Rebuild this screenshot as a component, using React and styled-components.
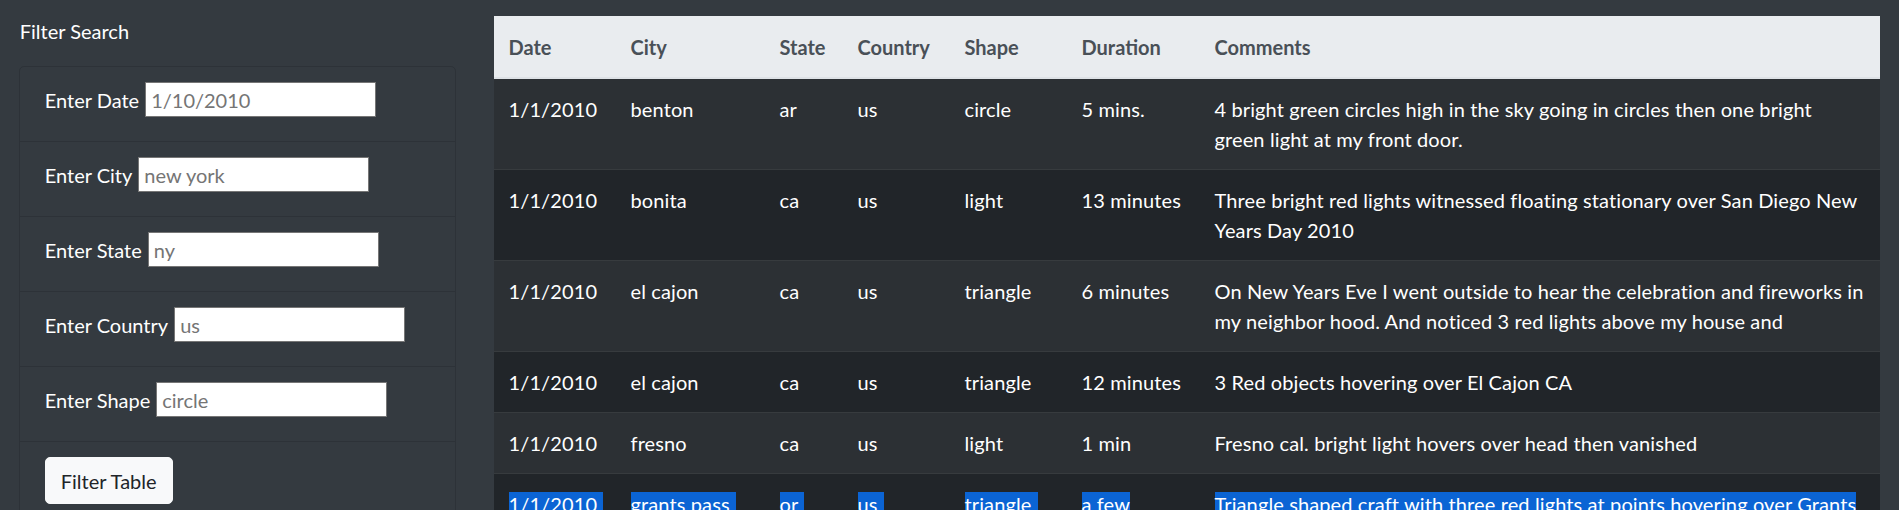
import React from "react";
import styled, { createGlobalStyle } from "styled-components";

const GlobalStyle = createGlobalStyle`
  html, body {
    margin: 0;
    overflow: hidden;
    background-color: #343a40;
  }
  body {
    font-family: Lato, "Liberation Sans", sans-serif;
    font-size: 20px;
    line-height: 30px;
    color: #fff;
  }
`;

const Page = styled.div`
  display: grid;
  grid-template-columns: 25% 75%;
`;

const Sidebar = styled.aside`
  padding: 16px 18.75px 0;
`;

const Title = styled.p`
  margin: 0 0 20px;
  padding-left: 1px;
`;

const FilterList = styled.ul`
  list-style: none;
  margin: 0;
  padding: 0;
  border: 1px solid rgba(0, 0, 0, 0.125);
  border-radius: 5px;
`;

const FilterItem = styled.li`
  box-sizing: border-box;
  height: 75px;
  padding: 15px 25px;
  border-bottom: 1px solid rgba(0, 0, 0, 0.125);
  display: flex;
  align-items: baseline;
  gap: 6px;
  &:last-child {
    border-bottom: 0;
  }
`;

const Label = styled.label`
  white-space: nowrap;
`;

const Input = styled.input`
  box-sizing: border-box;
  width: 231px;
  height: 35px;
  padding: 1px 5px;
  border: 1px solid #767676;
  border-radius: 0;
  background: #fff;
  font-family: inherit;
  font-size: 20px;
  color: #212529;
  &::placeholder {
    color: #757575;
  }
`;

const Button = styled.button`
  box-sizing: border-box;
  height: 47px;
  padding: 7.5px 15px;
  border: 1px solid #f8f9fa;
  border-radius: 5px;
  background-color: #f8f9fa;
  color: #212529;
  font-family: inherit;
  font-size: 20px;
  line-height: 30px;
`;

const Main = styled.main`
  padding: 16px 18.75px 0;
`;

const Table = styled.table`
  width: 100%;
  border-collapse: collapse;
  table-layout: fixed;
  background-color: #212529;
`;

const HeadCell = styled.th`
  text-align: left;
  vertical-align: bottom;
  padding: 15px;
  font-weight: 700;
  color: #495057;
  background-color: #e9ecef;
  border-top: 1px solid #e9ecef;
  border-bottom: 2px solid #dee2e6;
`;

const Row = styled.tr`
  &:nth-child(odd) {
    background-color: #2c3034;
  }
`;

const Cell = styled.td`
  vertical-align: top;
  padding: 15px;
  letter-spacing: 0.12px;
  border-top: 1px solid #373b3e;
`;

const Selected = styled.span`
  background-color: #0b64d4;
  padding-right: 6px;
`;

const filters = [
  { label: "Enter Date", placeholder: "1/10/2010" },
  { label: "Enter City", placeholder: "new york" },
  { label: "Enter State", placeholder: "ny" },
  { label: "Enter Country", placeholder: "us" },
  { label: "Enter Shape", placeholder: "circle" },
];

const columns = [
  { name: "Date", width: 122 },
  { name: "City", width: 149 },
  { name: "State", width: 78 },
  { name: "Country", width: 107 },
  { name: "Shape", width: 117 },
  { name: "Duration", width: 133 },
  { name: "Comments" },
];

const sightings = [
  ["1/1/2010", "benton", "ar", "us", "circle", "5 mins.", "4 bright green circles high in the sky going in circles then one bright green light at my front door."],
  ["1/1/2010", "bonita", "ca", "us", "light", "13 minutes", "Three bright red lights witnessed floating stationary over San Diego New Years Day 2010"],
  ["1/1/2010", "el cajon", "ca", "us", "triangle", "6 minutes", "On New Years Eve I went outside to hear the celebration and fireworks in my neighbor hood. And noticed 3 red lights above my house and"],
  ["1/1/2010", "el cajon", "ca", "us", "triangle", "12 minutes", "3 Red objects hovering over El Cajon CA"],
  ["1/1/2010", "fresno", "ca", "us", "light", "1 min", "Fresno cal. bright light hovers over head then vanished"],
  ["1/1/2010", "grants pass", "or", "us", "triangle", "a few seconds", "Triangle shaped craft with three red lights at points hovering over Grants Pass."],
];

export default function App() {
  return (
    <>
      <GlobalStyle />
      <Page>
        <Sidebar>
          <Title>Filter Search</Title>
          <FilterList>
            {filters.map((f) => (
              <FilterItem key={f.label}>
                <Label>{f.label}</Label>
                <Input type="text" placeholder={f.placeholder} />
              </FilterItem>
            ))}
            <FilterItem>
              <Button type="button">Filter Table</Button>
            </FilterItem>
          </FilterList>
        </Sidebar>
        <Main>
          <Table>
            <colgroup>
              {columns.map((c) => (
                <col key={c.name} style={c.width ? { width: c.width } : undefined} />
              ))}
            </colgroup>
            <thead>
              <tr>
                {columns.map((c) => (
                  <HeadCell key={c.name}>{c.name}</HeadCell>
                ))}
              </tr>
            </thead>
            <tbody>
              {sightings.map((row, i) => {
                const selected = i === sightings.length - 1;
                return (
                  <Row key={i}>
                    {row.map((value, j) => (
                      <Cell key={j}>
                        {selected ? <Selected>{value}</Selected> : value}
                      </Cell>
                    ))}
                  </Row>
                );
              })}
            </tbody>
          </Table>
        </Main>
      </Page>
    </>
  );
}
